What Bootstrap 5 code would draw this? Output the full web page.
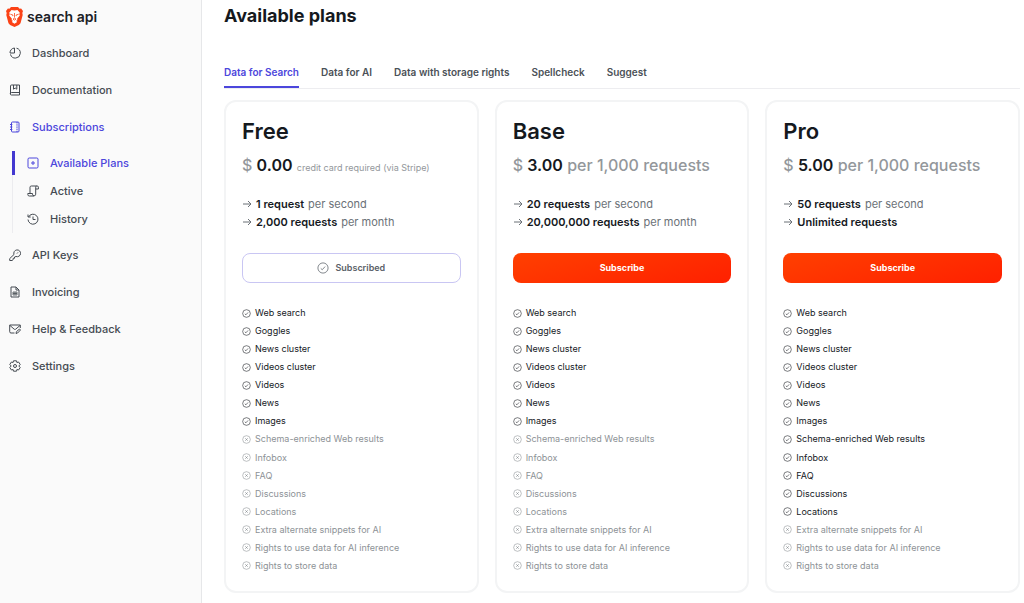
<!DOCTYPE html>
<html lang="en">
<head>
<meta charset="utf-8">
<meta name="viewport" content="width=device-width, initial-scale=1">
<title>Available plans</title>
<link href="https://cdn.jsdelivr.net/npm/bootstrap@5.3.0/dist/css/bootstrap.min.css" rel="stylesheet">
<style>
  body { font-family: Inter, "Liberation Sans", sans-serif; font-size: 11px; line-height: 18px; color: #15191e; background: #fff; }
  a { text-decoration: none; color: inherit; }
  svg { fill: none; stroke: currentColor; flex: none; }
  .sidebar { width: 202px; background: #fafafa; border-right: 1px solid #e6e7e9; color: #454b52; font-weight: 500; font-size: 11px; }
  .brand { height: 34px; padding-left: 6px; font-size: 14px; font-weight: 600; color: #1c2126; }
  .brand svg { stroke: none; }
  .side-link { height: 37px; padding-left: 9px; gap: 11px; }
  .subnav { margin: 6px 0 3px 12px; border-left: 1px solid #ececef; }
  .sub-link { height: 28px; margin-left: -1px; padding-left: 12px; gap: 11px; border-left: 3px solid transparent; }
  .current { color: #4c46dc; }
  .sub-link.current { height: 24px; margin: 2px 0 2px -1px; border-color: #4338d0; }
  .content { min-width: 0; padding: 0 4px 10px 22px; }
  h1 { font-size: 18px; line-height: 32px; font-weight: 700; margin: 0 0 29px; }
  .tabs { border-bottom: 1px solid #ededf0; gap: 22px; font-weight: 600; font-size: 10px; color: #4b5157; margin-bottom: 11px; }
  .tabs a { padding: 2px 0 5px; line-height: 18px; }
  .tabs .current { border-bottom: 2px solid #4c46dc; }
  .plans { display: grid; grid-template-columns: repeat(3, minmax(0, 1fr)); gap: 16px; }
  .plan { border: 2px solid #f3f4f5; border-radius: 12px; padding: 14px 16px 16px; }
  h2 { font-size: 22px; line-height: 30px; font-weight: 600; margin: 0 0 4px; }
  .price { font-size: 16px; line-height: 30px; font-weight: 500; color: #93979b; margin: 0 0 15px; white-space: nowrap; }
  .price b { font-weight: 600; color: #15191e; }
  .note { font-size: 9px; font-weight: 400; line-height: 1; }
  .limits { color: #6b7177; margin: 0 0 22px; }
  .limits li { gap: 4px; }
  .limits b { font-weight: 600; color: #15191e; }
  .plan .btn { height: 30px; border-radius: 8px; padding: 0; font-size: 9px; font-weight: 700; line-height: 18px; margin-bottom: 21px; gap: 6px; }
  .plan .btn-subscribed { border: 1px solid #c9c6f3; color: #5b6168; font-weight: 600; }
  .btn-subscribe, .btn-subscribe:hover { color: #fff; border: 0; background: linear-gradient(165deg, #ff4000, #ff2000); }
  .features { font-size: 9px; margin: 0; }
  .features li { gap: 4px; }
  .off { color: #8d9296; }
</style>
</head>
<body>
<svg class="d-none">
  <symbol id="yes" viewBox="0 0 16 16"><circle cx="8" cy="8" r="6.8"/><path d="m5 8.5 2 1.8 3.8-4.2"/></symbol>
  <symbol id="no" viewBox="0 0 16 16"><circle cx="8" cy="8" r="6.8"/><path stroke-width="1.5" d="m6 6 4 4m0-4-4 4"/></symbol>
  <symbol id="arrow" viewBox="0 0 10 10"><path d="M1 5h8M6 2l3 3-3 3"/></symbol>
</svg>
<div class="d-flex min-vh-100">
  <aside class="sidebar flex-shrink-0">
    <a href="#" class="brand d-flex align-items-center gap-1">
      <svg width="17" height="20" viewBox="0 0 17 20"><path fill="#fb4216" d="M5 0h7l1.6 1.7 1.5-.1L17 4l-.7 2 .4 2-2.2 8.2-1.6 1.8-4.4 2-4.4-2-1.6-1.8L.3 8l.4-2L0 4l1.900-2.400 1.500.100z"/><path fill="#fff" d="m5.500 3 3 .6 3-.6 2.300 2.800-.5 1.200.5 1.600-2.700 3.100.3 1.600-1.300.5 1 1.300-2.600 1.700-2.600-1.700 1-1.300-1.300-.5.3-1.600-2.700-3.100.5-1.600-.5-1.200z"/><path stroke="#fb4216" stroke-width=".8" d="m4.300 7.200 2.700.9-.3 1M12.700 7.200l-2.700.9.3 1M8.500 6v4.500m-1.500 1.600 1.500-.9 1.500.9-1.500 1z"/></svg>
      search api</a>
    <nav aria-label="Main">
      <a href="#" class="side-link d-flex align-items-center"><svg width="12" height="12" viewBox="0 0 12 12"><path d="M7.500 1.200a5 5 0 1 1-6 6.200M5.500 1v5H1a4.800 4.800 0 0 1 4.500-5z"/></svg>Dashboard</a>
      <a href="#" class="side-link d-flex align-items-center"><svg width="12" height="12" viewBox="0 0 12 12"><path d="M1.500 10V2a1 1 0 0 1 1-1h8v10h-8a1 1 0 0 1 0-2.500h8M4.500 1v4.200L6.200 4l1.600 1.200V1"/></svg>Documentation</a>
      <a href="#" class="side-link current d-flex align-items-center"><svg width="12" height="12" viewBox="0 0 12 12"><rect x="2.500" y="1" width="7.500" height="10" rx="1"/><path d="M8 1v10M1 3.500h2.500M1 6h2.500M1 8.500h2.500" stroke-dasharray="1.500 .7"/></svg>Subscriptions</a>
      <div class="subnav">
        <a href="#" class="sub-link current d-flex align-items-center" aria-current="page"><svg width="12" height="12" viewBox="0 0 12 12"><rect x="1" y="1" width="10" height="10" rx="1.200"/><path d="M6 4v4M4 6h4"/></svg>Available Plans</a>
        <a href="#" class="sub-link d-flex align-items-center"><svg width="12" height="12" viewBox="0 0 12 12"><path d="M3 8.500V2.200A1.300 1.300 0 0 1 4.300 1h5.900a1.200 1.200 0 0 1 1.200 1.200V4H8.800M9.500 1a1 1 0 0 0-.8 1.200v7a1.600 1.600 0 0 1-3.200 0v-.7H.8v1A1.500 1.500 0 0 0 2.300 11H7"/></svg>Active</a>
        <a href="#" class="sub-link d-flex align-items-center"><svg width="12" height="12" viewBox="0 0 12 12"><path d="M1.500 4A5 5 0 1 1 1 6.500M1 1.500V4h2.700M6 3.500v3h2.500"/></svg>History</a>
      </div>
      <a href="#" class="side-link d-flex align-items-center"><svg width="12" height="12" viewBox="0 0 12 12"><path d="M5 5.500a3.400 3.400 0 1 1 2 2L5.500 8v1.300H4.200v1.300L3 11.500H.7V9.600z"/><path d="M8 4.500 9 3.400"/></svg>API Keys</a>
      <a href="#" class="side-link d-flex align-items-center"><svg width="12" height="12" viewBox="0 0 12 12"><path d="M2 1h5l3 3v7H2zM7 1v3h3"/><path stroke-width=".8" d="M4 6h4v3H4zM4 7.500h4M6 6v3"/></svg>Invoicing</a>
      <a href="#" class="side-link d-flex align-items-center"><svg width="12" height="12" viewBox="0 0 12 12"><path d="M5.500 10H2a1.300 1.300 0 0 1-1.300-1.300V2h10.600v3M1 2.500l4.300 3.800h1.200L11 2.500M7 10.500l.4-1.800L10.500 6l1 1-2.900 3z"/></svg>Help &amp; Feedback</a>
      <a href="#" class="side-link d-flex align-items-center"><svg width="12" height="12" viewBox="0 0 12 12"><path d="m4.500.8-.4 1.700-1.700-.5L.8 4.500 2.200 6 .8 7.500 2.400 10l1.700-.5.4 1.700h3l.4-1.700 1.700.5 1.600-2.500L9.800 6l1.400-1.500L9.600 2l-1.700.5L7.500.8z"/><circle cx="6" cy="6" r="1.500"/></svg>Settings</a>
    </nav>
  </aside>
  <main class="content d-flex flex-column flex-grow-1">
    <h1>Available plans</h1>
    <nav class="tabs d-flex" aria-label="Plan types">
      <a href="#" class="current" aria-current="true">Data for Search</a><a href="#">Data for AI</a><a href="#">Data with storage rights</a><a href="#">Spellcheck</a><a href="#">Suggest</a>
    </nav>
    <div class="plans flex-grow-1">
      <section class="plan d-flex flex-column">
        <h2>Free</h2>
        <p class="price">$ <b>0.00</b> <span class="note">credit card required (via Stripe)</span></p>
        <ul class="limits list-unstyled">
          <li class="d-flex align-items-center"><svg width="10" height="10"><use href="#arrow"/></svg><b>1 request</b> per second</li>
          <li class="d-flex align-items-center"><svg width="10" height="10"><use href="#arrow"/></svg><b>2,000 requests</b> per month</li>
        </ul>
        <button type="button" class="btn btn-subscribed d-flex align-items-center justify-content-center"><svg width="12" height="12"><use href="#yes"/></svg>Subscribed</button>
        <ul class="features list-unstyled d-flex flex-column flex-grow-1 justify-content-between">
          <li class="d-flex align-items-center"><svg width="9" height="9"><use href="#yes"/></svg>Web search</li>
          <li class="d-flex align-items-center"><svg width="9" height="9"><use href="#yes"/></svg>Goggles</li>
          <li class="d-flex align-items-center"><svg width="9" height="9"><use href="#yes"/></svg>News cluster</li>
          <li class="d-flex align-items-center"><svg width="9" height="9"><use href="#yes"/></svg>Videos cluster</li>
          <li class="d-flex align-items-center"><svg width="9" height="9"><use href="#yes"/></svg>Videos</li>
          <li class="d-flex align-items-center"><svg width="9" height="9"><use href="#yes"/></svg>News</li>
          <li class="d-flex align-items-center"><svg width="9" height="9"><use href="#yes"/></svg>Images</li>
          <li class="off d-flex align-items-center"><svg width="9" height="9"><use href="#no"/></svg>Schema-enriched Web results</li>
          <li class="off d-flex align-items-center"><svg width="9" height="9"><use href="#no"/></svg>Infobox</li>
          <li class="off d-flex align-items-center"><svg width="9" height="9"><use href="#no"/></svg>FAQ</li>
          <li class="off d-flex align-items-center"><svg width="9" height="9"><use href="#no"/></svg>Discussions</li>
          <li class="off d-flex align-items-center"><svg width="9" height="9"><use href="#no"/></svg>Locations</li>
          <li class="off d-flex align-items-center"><svg width="9" height="9"><use href="#no"/></svg>Extra alternate snippets for AI</li>
          <li class="off d-flex align-items-center"><svg width="9" height="9"><use href="#no"/></svg>Rights to use data for AI inference</li>
          <li class="off d-flex align-items-center"><svg width="9" height="9"><use href="#no"/></svg>Rights to store data</li>
        </ul>
      </section>
      <section class="plan d-flex flex-column">
        <h2>Base</h2>
        <p class="price">$ <b>3.00</b> per 1,000 requests</p>
        <ul class="limits list-unstyled">
          <li class="d-flex align-items-center"><svg width="10" height="10"><use href="#arrow"/></svg><b>20 requests</b> per second</li>
          <li class="d-flex align-items-center"><svg width="10" height="10"><use href="#arrow"/></svg><b>20,000,000 requests</b> per month</li>
        </ul>
        <button type="button" class="btn btn-subscribe">Subscribe</button>
        <ul class="features list-unstyled d-flex flex-column flex-grow-1 justify-content-between">
          <li class="d-flex align-items-center"><svg width="9" height="9"><use href="#yes"/></svg>Web search</li>
          <li class="d-flex align-items-center"><svg width="9" height="9"><use href="#yes"/></svg>Goggles</li>
          <li class="d-flex align-items-center"><svg width="9" height="9"><use href="#yes"/></svg>News cluster</li>
          <li class="d-flex align-items-center"><svg width="9" height="9"><use href="#yes"/></svg>Videos cluster</li>
          <li class="d-flex align-items-center"><svg width="9" height="9"><use href="#yes"/></svg>Videos</li>
          <li class="d-flex align-items-center"><svg width="9" height="9"><use href="#yes"/></svg>News</li>
          <li class="d-flex align-items-center"><svg width="9" height="9"><use href="#yes"/></svg>Images</li>
          <li class="off d-flex align-items-center"><svg width="9" height="9"><use href="#no"/></svg>Schema-enriched Web results</li>
          <li class="off d-flex align-items-center"><svg width="9" height="9"><use href="#no"/></svg>Infobox</li>
          <li class="off d-flex align-items-center"><svg width="9" height="9"><use href="#no"/></svg>FAQ</li>
          <li class="off d-flex align-items-center"><svg width="9" height="9"><use href="#no"/></svg>Discussions</li>
          <li class="off d-flex align-items-center"><svg width="9" height="9"><use href="#no"/></svg>Locations</li>
          <li class="off d-flex align-items-center"><svg width="9" height="9"><use href="#no"/></svg>Extra alternate snippets for AI</li>
          <li class="off d-flex align-items-center"><svg width="9" height="9"><use href="#no"/></svg>Rights to use data for AI inference</li>
          <li class="off d-flex align-items-center"><svg width="9" height="9"><use href="#no"/></svg>Rights to store data</li>
        </ul>
      </section>
      <section class="plan d-flex flex-column">
        <h2>Pro</h2>
        <p class="price">$ <b>5.00</b> per 1,000 requests</p>
        <ul class="limits list-unstyled">
          <li class="d-flex align-items-center"><svg width="10" height="10"><use href="#arrow"/></svg><b>50 requests</b> per second</li>
          <li class="d-flex align-items-center"><svg width="10" height="10"><use href="#arrow"/></svg><b>Unlimited requests</b></li>
        </ul>
        <button type="button" class="btn btn-subscribe">Subscribe</button>
        <ul class="features list-unstyled d-flex flex-column flex-grow-1 justify-content-between">
          <li class="d-flex align-items-center"><svg width="9" height="9"><use href="#yes"/></svg>Web search</li>
          <li class="d-flex align-items-center"><svg width="9" height="9"><use href="#yes"/></svg>Goggles</li>
          <li class="d-flex align-items-center"><svg width="9" height="9"><use href="#yes"/></svg>News cluster</li>
          <li class="d-flex align-items-center"><svg width="9" height="9"><use href="#yes"/></svg>Videos cluster</li>
          <li class="d-flex align-items-center"><svg width="9" height="9"><use href="#yes"/></svg>Videos</li>
          <li class="d-flex align-items-center"><svg width="9" height="9"><use href="#yes"/></svg>News</li>
          <li class="d-flex align-items-center"><svg width="9" height="9"><use href="#yes"/></svg>Images</li>
          <li class="d-flex align-items-center"><svg width="9" height="9"><use href="#yes"/></svg>Schema-enriched Web results</li>
          <li class="d-flex align-items-center"><svg width="9" height="9"><use href="#yes"/></svg>Infobox</li>
          <li class="d-flex align-items-center"><svg width="9" height="9"><use href="#yes"/></svg>FAQ</li>
          <li class="d-flex align-items-center"><svg width="9" height="9"><use href="#yes"/></svg>Discussions</li>
          <li class="d-flex align-items-center"><svg width="9" height="9"><use href="#yes"/></svg>Locations</li>
          <li class="off d-flex align-items-center"><svg width="9" height="9"><use href="#no"/></svg>Extra alternate snippets for AI</li>
          <li class="off d-flex align-items-center"><svg width="9" height="9"><use href="#no"/></svg>Rights to use data for AI inference</li>
          <li class="off d-flex align-items-center"><svg width="9" height="9"><use href="#no"/></svg>Rights to store data</li>
        </ul>
      </section>
    </div>
  </main>
</div>
<script src="https://cdn.jsdelivr.net/npm/bootstrap@5.3.0/dist/js/bootstrap.bundle.min.js"></script>
</body>
</html>
